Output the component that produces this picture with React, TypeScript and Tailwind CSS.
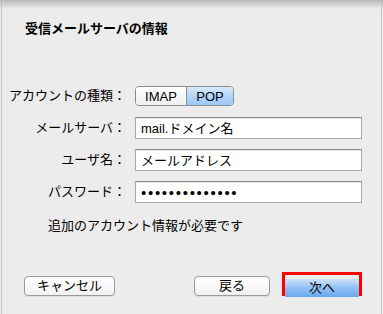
import React from 'react';

const rows = [
  { label: 'メールサーバ：', value: 'mail.ドメイン名' },
  { label: 'ユーザ名：', value: 'メールアドレス' },
];

function Field({ children }: { children: React.ReactNode }) {
  return (
    <div className="h-[22px] w-[227px] flex items-center pl-[5px] bg-white border border-[#a9a9a9] border-t-[#8c8c8c] shadow-[inset_0_1px_1px_rgba(0,0,0,0.12)] text-[13px] text-black leading-none">
      {children}
    </div>
  );
}

function PushButton({ label, width }: { label: string; width: string }) {
  return (
    <button
      className={`${width} h-[20px] rounded-[4px] border border-[#9a9a9a] bg-gradient-to-b from-white to-[#f1f1f1] text-[13px] leading-none text-black shadow-[0_1px_0_rgba(0,0,0,0.06)]`}
    >
      {label}
    </button>
  );
}

export default function App() {
  return (
    <div
      className="relative w-[383px] h-[314px] bg-[#ececec] overflow-hidden text-black"
      style={{ fontFamily: '"Liberation Sans", "Noto Sans CJK JP", sans-serif' }}
    >
      <div className="absolute inset-x-0 top-0 h-[9px] bg-gradient-to-b from-[#b9b9b9] to-transparent" />
      <div className="mx-[1px] h-full border-x border-[#c6c6c6] flex flex-col">
        <h1 className="pl-[23px] pt-[21px] text-[13px] leading-[16px] font-bold">受信メールサーバの情報</h1>

        <div className="mt-[48px] grid grid-cols-[124px_1fr] gap-x-[9px] gap-y-[10px] items-center">
          <div className="text-right text-[13px] leading-[22px]">アカウントの種類：</div>
          <div className="h-[22px] flex items-center">
            <div className="flex h-[20px] rounded-[4px] border border-[#8e8e8e] overflow-hidden text-[13px] leading-none">
              <div className="w-[51px] flex items-center justify-center bg-gradient-to-b from-white to-[#f0f0f0] border-r border-[#8e8e8e]">
                IMAP
              </div>
              <div className="w-[46px] flex items-center justify-center bg-gradient-to-b from-[#d9eafc] via-[#b3d5fa] to-[#9cc8f6]">
                POP
              </div>
            </div>
          </div>

          {rows.map(r => (
            <React.Fragment key={r.label}>
              <div className="text-right text-[13px] leading-[22px]">{r.label}</div>
              <Field>{r.value}</Field>
            </React.Fragment>
          ))}

          <div className="text-right text-[13px] leading-[22px]">パスワード：</div>
          <Field>
            <span className="text-[15px] tracking-[1.7px] leading-none">••••••••••••••</span>
          </Field>
        </div>

        <p className="mt-[15px] pl-[46px] text-[13px] leading-[16px]">追加のアカウント情報が必要です</p>

        <div className="mt-[38px] flex items-start pl-[22px] pr-[19px]">
          <div className="mt-[1px]">
            <PushButton label="キャンセル" width="w-[91px]" />
          </div>
          <div className="ml-auto mt-[1px]">
            <PushButton label="戻る" width="w-[76px]" />
          </div>
          <div className="ml-[12px] w-[80px] h-[24px] border-[3px] border-[#ff0000]">
            <button className="w-full h-full bg-gradient-to-b from-[#cfe3fb] via-[#8fc0f3] to-[#6aa9ee] text-[13px] leading-none text-black">
              次へ
            </button>
          </div>
        </div>
      </div>
    </div>
  );
}
